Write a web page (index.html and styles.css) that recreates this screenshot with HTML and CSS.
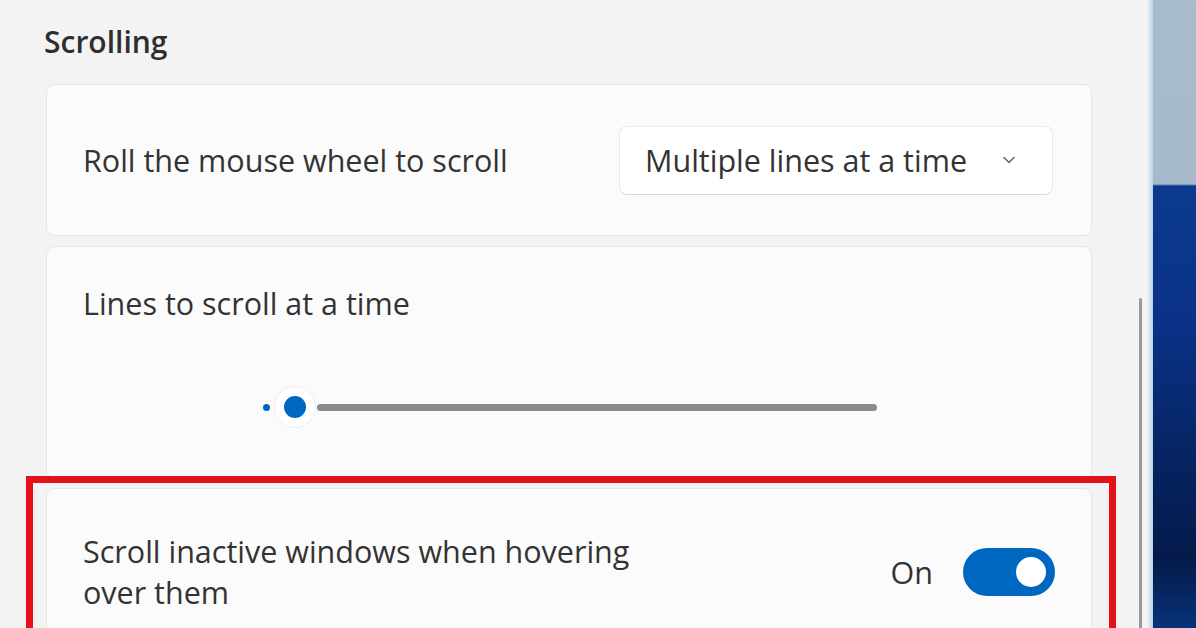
FILE: index.html
```html
<!DOCTYPE html>
<html>
<head>
<meta charset="utf-8">
<link rel="stylesheet" href="styles.css">
</head>
<body>
<div class="screen">
  <div class="window">
    <div class="content">
      <h2 class="heading">Scrolling</h2>
      <div class="card card-row">
        <span class="label">Roll the mouse wheel to scroll</span>
        <div class="dropdown">
          <span>Multiple lines at a time</span>
          <svg class="chev" width="18" height="12" viewBox="0 0 18 12"><path d="M4 3.5 L9 8.5 L14 3.5" fill="none" stroke="#6a6a6a" stroke-width="1.6" stroke-linecap="round" stroke-linejoin="round"/></svg>
        </div>
      </div>
      <div class="card card-slider">
        <span class="label">Lines to scroll at a time</span>
        <div class="slider">
          <span class="fill-dot"></span>
          <span class="thumb"><span class="thumb-core"></span></span>
          <span class="track"></span>
        </div>
      </div>
      <div class="card card-row card-toggle">
        <span class="label wrap">Scroll inactive windows when hovering over them</span>
        <div class="toggle-wrap">
          <span class="state">On</span>
          <span class="toggle"><span class="knob"></span></span>
        </div>
      </div>
    </div>
    <div class="scrollbar"></div>
    <div class="highlight"></div>
  </div>
  <div class="edge"></div>
  <div class="wallpaper"></div>
</div>
</body>
</html>
```
FILE: styles.css
```css
html, body {
  margin: 0;
  padding: 0;
}
body {
  font-family: "Open Sans", "Noto Sans", sans-serif;
  color: #1f1f1f;
  background: #f3f3f3;
}
.screen {
  display: flex;
  width: 1196px;
  height: 628px;
  overflow: hidden;
}
.window {
  position: relative;
  width: 1148px;
  flex: none;
  background: #f3f3f3;
  overflow: hidden;
}
.content {
  padding: 0 0 0 46px;
  width: 1046px;
}
.heading {
  margin: 23px 0 23px -2px;
  font-size: 30px;
  line-height: 38px;
  font-weight: 600;
  color: #2e2e2e;
}
.card {
  background: #fbfbfb;
  border: 1px solid #e6e6e6;
  border-radius: 8px;
  box-sizing: border-box;
  margin-bottom: 10px;
}
.card-row {
  display: flex;
  align-items: center;
  justify-content: space-between;
  height: 152px;
  padding: 0 38px 0 36px;
}
.label {
  font-size: 30.5px;
  color: #333333;
}
.dropdown {
  width: 434px;
  height: 69px;
  box-sizing: border-box;
  background: #ffffff;
  border: 1px solid #e8e8e8;
  border-bottom-color: #d8d8d8;
  border-radius: 8px;
  display: flex;
  align-items: center;
  justify-content: space-between;
  padding: 0 34px 0 25px;
  font-size: 30.5px;
  color: #333333;
}
.chev {
  display: block;
}
.card-slider {
  height: 232px;
  padding: 36px 0 0 36px;
  display: flex;
  flex-direction: column;
}
.card-slider .label {
  line-height: 40px;
}
.slider {
  display: flex;
  align-items: center;
  margin: 64px 0 0 180px;
  height: 40px;
}
.fill-dot {
  width: 7px;
  height: 7px;
  border-radius: 50%;
  background: #0067c0;
  flex: none;
}
.thumb {
  width: 40px;
  height: 40px;
  border-radius: 50%;
  background: #ffffff;
  box-shadow: 0 0 0 1px #f2ede6;
  display: flex;
  align-items: center;
  justify-content: center;
  margin-left: 5px;
  flex: none;
}
.thumb-core {
  width: 22px;
  height: 22px;
  border-radius: 50%;
  background: #0067c0;
}
.track {
  width: 560px;
  height: 7px;
  border-radius: 4px;
  background: #8a8a8a;
  margin-left: 2px;
}
.card-toggle {
  height: 160px;
  align-items: flex-start;
  padding-top: 42px;
  padding-right: 36px;
  margin-bottom: 0;
}
.wrap {
  width: 560px;
  line-height: 41px;
}
.toggle-wrap {
  display: flex;
  align-items: center;
  gap: 30px;
  margin-top: 17px;
}
.state {
  font-size: 30.5px;
  color: #333333;
}
.toggle {
  width: 92px;
  height: 48px;
  border-radius: 24px;
  background: #0067c0;
  display: flex;
  align-items: center;
  justify-content: flex-end;
  padding-right: 9px;
  box-sizing: border-box;
}
.knob {
  width: 30px;
  height: 30px;
  border-radius: 50%;
  background: #ffffff;
}
.scrollbar {
  position: absolute;
  left: 1139px;
  top: 298px;
  width: 3px;
  height: 340px;
  border-radius: 2px;
  background: #9a9a9a;
}
.highlight {
  position: absolute;
  left: 26px;
  top: 476px;
  width: 1090px;
  height: 200px;
  box-sizing: border-box;
  border: 7px solid #e5121b;
}
.edge {
  width: 5px;
  flex: none;
  background: linear-gradient(90deg, #e8eef2, #b9d2e6);
}
.wallpaper {
  flex: 1;
  background:
    linear-gradient(180deg, #a9bccb 0, #a6bacb 184px, #0a3a8e 186px, #0a3288 320px, #06235f 470px, #041a4a 560px, #08337a 628px);
}
```
